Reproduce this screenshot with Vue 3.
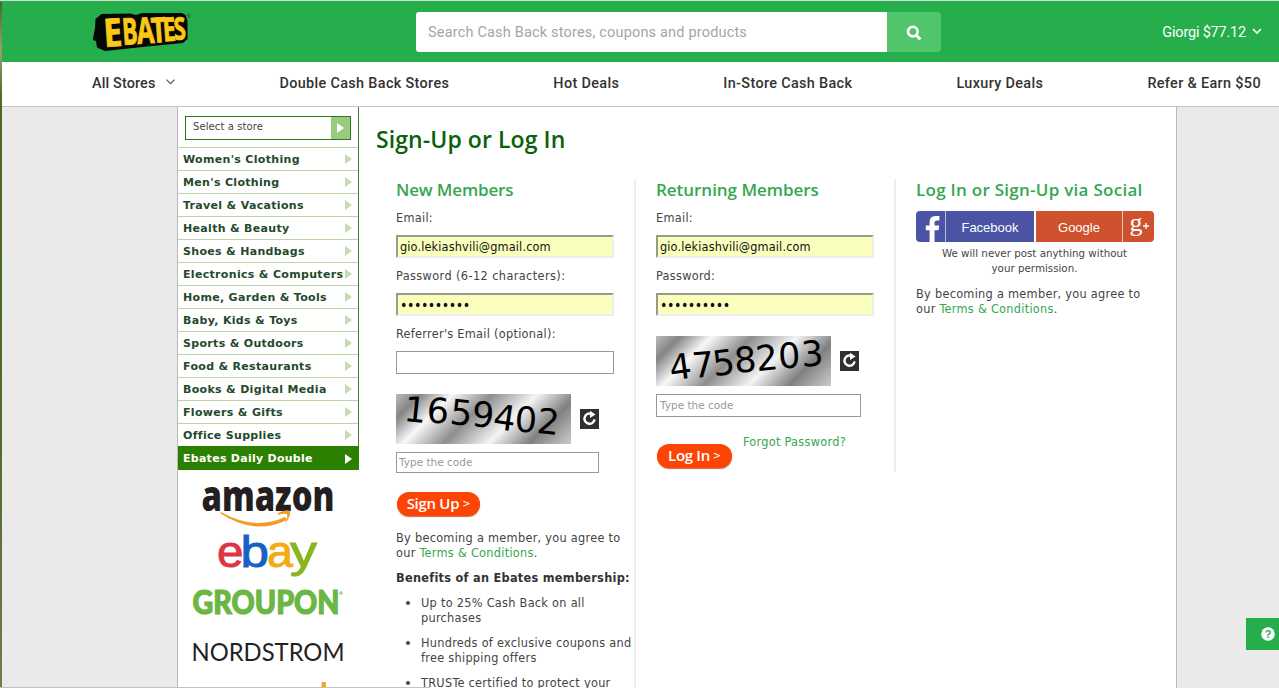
<script setup>
const nav = ['Double Cash Back Stores', 'Hot Deals', 'In-Store Cash Back', 'Luxury Deals', 'Refer & Earn $50']
const categories = [
  "Women's Clothing", "Men's Clothing", 'Travel & Vacations', 'Health & Beauty', 'Shoes & Handbags',
  'Electronics & Computers', 'Home, Garden & Tools', 'Baby, Kids & Toys', 'Sports & Outdoors',
  'Food & Restaurants', 'Books & Digital Media', 'Flowers & Gifts', 'Office Supplies',
]
const email = 'gio.lekiashvili@gmail.com'
const dots = '••••••••••'
const brand = [
  { c: 'E', x: 12.5, y: 38, s: 39, w: 18.5 }, { c: 'B', x: 31, y: 36, s: 37, w: 15.5 }, { c: 'A', x: 45.5, y: 35, s: 36, w: 17.5 },
  { c: 'T', x: 60, y: 34, s: 35, w: 15 }, { c: 'E', x: 71.5, y: 32.5, s: 33, w: 13 }, { c: 'S', x: 82.5, y: 31, s: 31, w: 12 },
]
const ebay = [
  { c: 'e', x: 39, w: 26.5, f: '#dc3545' }, { c: 'b', x: 62.5, w: 28.5, f: '#1562c4' },
  { c: 'a', x: 89, w: 26, f: '#f2ab13' }, { c: 'y', x: 112, w: 27, f: '#8ab51e' },
]
const captchaA = [
  { d: '1', x: 18, y: 28, r: 6 }, { d: '6', x: 41, y: 29, r: 4 }, { d: '5', x: 64, y: 31, r: 6 },
  { d: '9', x: 86, y: 33, r: 5 }, { d: '4', x: 107, y: 36, r: 8 }, { d: '0', x: 129, y: 38, r: 4 },
  { d: '2', x: 151, y: 40, r: 6 },
]
const captchaB = [
  { d: '4', x: 26, y: 43, r: -8 }, { d: '7', x: 48, y: 41, r: -5 }, { d: '5', x: 69, y: 39, r: -7 },
  { d: '8', x: 90, y: 36, r: -4 }, { d: '2', x: 112, y: 34, r: -6 }, { d: '0', x: 134, y: 32, r: -3 },
  { d: '3', x: 157, y: 30, r: -4 },
]
</script>

<template>
  <div class="page">
    <header class="top">
      <svg class="logo" width="102" height="46" viewBox="0 0 102 46">
        <path d="M9.5 5 L38 4.5 L44 6 L50 4 L90 4 L93.5 6 L95.5 12 L95.5 30 L91 34 L60 37 L13 42 L5 38.5 L4 32 L.7 31 L3 19 L3.5 10 Z" fill="#050703" />
        <text v-for="b in brand" :key="b.x" class="brand" :x="b.x" :y="b.y" :font-size="b.s" :textLength="b.w" lengthAdjust="spacingAndGlyphs" :transform="`rotate(-4 ${b.x} ${b.y})`">{{ b.c }}</text>
        <text class="reg" x="94.5" y="8.5">®</text>
      </svg>
      <div class="search">
        <div class="search-field">Search Cash Back stores, coupons and products</div>
        <div class="search-btn">
          <svg width="16" height="16" viewBox="0 0 16 16" fill="none" stroke="#fff" stroke-width="2.6">
            <circle cx="6.8" cy="6.6" r="4.8" /><path d="M10.2 10.2 L14.4 14.4" stroke-width="3" />
          </svg>
        </div>
      </div>
      <div class="user">
        <span>Giorgi $77.12</span>
        <svg width="10" height="7" viewBox="0 0 10 7" fill="none" stroke="#fff" stroke-width="1.6"><path d="M1 1 L5 5 L9 1" /></svg>
      </div>
    </header>
    <nav class="nav">
      <span class="all">All Stores
        <svg width="9" height="6" viewBox="0 0 9 6" fill="none" stroke="#555" stroke-width="1.2"><path d="M.5 .7 L4.5 4.7 L8.5 .7" /></svg>
      </span>
      <span v-for="n in nav" :key="n">{{ n }}</span>
    </nav>
    <div class="body">
      <main class="sheet">
        <aside class="side">
          <div class="menu">
            <div class="picker"><div class="select"><span>Select a store</span><i><b class="tri white"></b></i></div></div>
            <div v-for="c in categories" :key="c" class="cat"><span>{{ c }}</span><b class="tri"></b></div>
            <div class="cat daily"><span>Ebates Daily Double</span><b class="tri white"></b></div>
          </div>
          <svg class="stores" width="180" height="218" viewBox="0 0 180 218">
            <text class="amazon" x="23.5" y="40.5" textLength="133" lengthAdjust="spacingAndGlyphs">amazon</text>
            <path d="M43 42 Q76 61 107 47 L109 50 Q76 66 42 43 Z" fill="#f29b26" />
            <path d="M100 43 Q108 39 112 41 Q113 46 107 54 Q110 47 109 44 Q105 43 100 45 Z" fill="#f29b26" />
            <text v-for="e in ebay" :key="e.c" class="ebay" y="97" :x="e.x" :textLength="e.w" lengthAdjust="spacingAndGlyphs" :fill="e.f" :stroke="e.f">{{ e.c }}</text>
            <text class="groupon" x="14.5" y="144" textLength="147" lengthAdjust="spacingAndGlyphs">GROUPON</text>
            <circle cx="163" cy="123" r="1.3" fill="none" stroke="#6cb644" stroke-width=".8" />
            <text class="nordstrom" x="13.5" y="190.5" textLength="153" lengthAdjust="spacingAndGlyphs">NORDSTROM</text>
            <rect x="143.5" y="212" width="4.5" height="8" rx="1" fill="#f5a623" />
          </svg>
        </aside>
        <section class="content">
          <h1>Sign-Up or Log In</h1>
          <div class="cols">
            <div class="col new">
              <h2 class="h-new">New Members</h2>
              <label>Email:</label>
              <div class="input filled">{{ email }}</div>
              <label class="chars">Password (6-12 characters):</label>
              <div class="input filled pw">{{ dots }}</div>
              <label>Referrer's Email (optional):</label>
              <div class="input plain"></div>
              <div class="captcha-row">
                <svg class="captcha" width="175" height="50" viewBox="0 0 175 50">
                  <text v-for="g in captchaA" :key="g.x" :x="g.x" :y="g.y" :transform="`rotate(${g.r} ${g.x} ${g.y})`">{{ g.d }}</text>
                </svg>
                <div class="reload"><svg width="19" height="20" viewBox="0 0 19 20"><path d="M12.4 5.4 A5.1 5.1 0 1 0 14.6 10.4" fill="none" stroke="#fff" stroke-width="2.4" /><path d="M10 1.8 L15.6 5.4 L10 9 Z" fill="#fff" /></svg></div>
              </div>
              <div class="code">Type the code</div>
              <div class="pill signup"><span>Sign Up</span><em>&gt;</em></div>
              <p>By becoming a member, you agree to<br>our <a>Terms &amp; Conditions</a>.</p>
              <p class="benefits">Benefits of an Ebates membership:</p>
              <ul>
                <li>Up to 25% Cash Back on all<br>purchases</li>
                <li>Hundreds of exclusive coupons and<br>free shipping offers</li>
                <li>TRUSTe certified to protect your</li>
              </ul>
            </div>
            <div class="col ret">
              <h2 class="h-ret">Returning Members</h2>
              <label>Email:</label>
              <div class="input filled">{{ email }}</div>
              <label>Password:</label>
              <div class="input filled pw">{{ dots }}</div>
              <div class="captcha-row">
                <svg class="captcha" width="175" height="50" viewBox="0 0 175 50">
                  <text v-for="g in captchaB" :key="g.x" :x="g.x" :y="g.y" :transform="`rotate(${g.r} ${g.x} ${g.y})`">{{ g.d }}</text>
                </svg>
                <div class="reload"><svg width="19" height="20" viewBox="0 0 19 20"><path d="M12.4 5.4 A5.1 5.1 0 1 0 14.6 10.4" fill="none" stroke="#fff" stroke-width="2.4" /><path d="M10 1.8 L15.6 5.4 L10 9 Z" fill="#fff" /></svg></div>
              </div>
              <div class="code tall">Type the code</div>
              <div class="login-row"><div class="pill login"><span>Log In</span><em>&gt;</em></div><a>Forgot Password?</a></div>
            </div>
            <div class="col soc">
              <h2 class="h-soc">Log In or Sign-Up via Social</h2>
              <div class="social">
                <div class="fb">
                  <svg width="30" height="31" viewBox="0 0 30 31"><path d="M13.6 31 V19.2 H9.8 V14.4 H13.6 V11 Q13.6 5 19.5 5 H23.4 V9.6 H20.8 Q18.5 9.6 18.5 11.8 V14.4 H23.2 L22.5 19.2 H18.5 V31 Z" fill="#fff" /><path d="M29.5 0 V31" stroke="#b9bce0" /></svg>
                  <span>Facebook</span>
                </div>
                <div class="gg">
                  <span>Google</span>
                  <svg width="32" height="31" viewBox="0 0 32 31"><path d="M.5 0 V31" stroke="#f0c9bc" /><text class="g" x="7.5" y="19.5" textLength="13" lengthAdjust="spacingAndGlyphs">g</text><path d="M21 15 H27 M24 12 V18" stroke="#fff" stroke-width="1.3" /></svg>
                </div>
              </div>
              <p class="note">We will never post anything without<br>your permission.</p>
              <p class="agree">By becoming a member, you agree to<br>our <a>Terms &amp; Conditions</a>.</p>
            </div>
          </div>
        </section>
      </main>
    </div>
    <div class="help"><svg width="14" height="14" viewBox="0 0 14 14"><circle cx="7" cy="7" r="6.8" fill="#fff" /><text x="7" y="11" text-anchor="middle">?</text></svg></div>
    <div class="edge"></div>
    <div class="status"></div>
  </div>
</template>

<style>
body { background: #eaeaea; overflow: hidden; }
</style>

<style scoped>
* { box-sizing: border-box; }
svg { overflow: visible; }
.page { position: relative; width: 1279px; height: 688px; overflow: hidden; display: flex; flex-direction: column; background: #eaeaea; font-family: "DejaVu Sans Condensed", "DejaVu Sans", sans-serif; font-size: 12.6px; color: #444; white-space: nowrap; }
.edge { position: absolute; left: 0; top: 2px; bottom: 0; width: 2px; background: linear-gradient(#47632f, #93a56f 7%, #4e6a24 14%, #4f6a2a 60%, #6d7d4c); }
.status { position: absolute; left: 0; bottom: 0; width: 430px; height: 1px; background: #c3c3c3; }
.top { height: 62px; flex: none; background: #25ae4b; border-top: 1px solid #c9dccd; display: flex; padding: 0 17px 0 92px; }
.logo { margin-top: 8px; width: 102px; flex: none; }
.brand { font-family: "Open Sans", sans-serif; font-weight: 700; fill: #fbc816; stroke: #fbc816; stroke-width: .8; }
.reg { font: 6px "Liberation Sans", sans-serif; fill: #10330f; }
.search { display: flex; margin: 11px 0 0 222px; width: 525px; height: 40px; border-radius: 3px; overflow: hidden; }
.search-field { width: 471px; background: #fff; padding-left: 12px; font: 14.5px/41px Roboto, sans-serif; letter-spacing: .18px; color: #a5a5a5; }
.search-btn { flex: 1; background: #50c56b; display: flex; align-items: center; justify-content: center; padding-top: 1px; }
.user { margin-left: auto; color: #fff; display: flex; align-items: center; gap: 6px; font: 14.5px Roboto, sans-serif; letter-spacing: -.2px; padding-top: 2px; }
.user svg { margin-bottom: 3px; }
.nav { height: 45px; flex: none; background: #fff; border-bottom: 1px solid #c4c4c4; display: flex; justify-content: space-between; align-items: center; padding: 0 18px 1px 92px; font: 500 14.4px Roboto, sans-serif; letter-spacing: .35px; color: #333; }
.all { letter-spacing: .15px; }
.all svg { margin: 0 0 5px 7px; vertical-align: middle; }
.body { height: 581px; padding-left: 177px; display: flex; }
.sheet { width: 1000px; background: #fff; border: solid #b9b9b9; border-width: 0 1px; display: flex; }
.side { width: 181px; flex: none; }
.menu { border-right: 1px solid #3c7d26; }
.picker { height: 40px; padding: 9px 7px 0; }
.select { height: 24px; border: 1px solid #2b7a13; display: flex; justify-content: space-between; padding-left: 7px; font: 10px/20px "DejaVu Sans", sans-serif; letter-spacing: .1px; color: #444; width: 166px; }
.select i { width: 19px; background: #9aca7e; display: flex; align-items: center; justify-content: center; }
.cat { height: 23px; border-top: 1px solid #bcd3a6; padding: 0 6px 0 5px; display: flex; align-items: center; justify-content: space-between; font: 700 11px/20px "DejaVu Sans", sans-serif; letter-spacing: .32px; color: #24492b; }
.cat span { padding-top: 2px; }
.daily span { padding-top: 0; }
.daily { background: #2b8000; border-color: #2b8000; color: #fff; height: 24px; margin-right: -1px; padding-right: 7px; letter-spacing: .27px; }
.tri { border: 5px solid transparent; border-left: 7px solid #c3ddb0; border-right: 0; flex: none; margin-left: -3px; }
.tri.white { border-left-color: #fff; margin: 0; }
.stores { display: block; }
.amazon { font: 800 42px "Open Sans", sans-serif; fill: #231f20; }
.ebay { font: 44px "Liberation Sans", sans-serif; stroke-width: .9; }
.groupon { font: 900 31.5px Lato, sans-serif; fill: #6cb644; stroke: #6cb644; stroke-width: 1.2; }
.nordstrom { font: 25px Lato, sans-serif; fill: #222; }
.content { padding-left: 17px; }
h1 { margin: 17px 0 0; height: 55px; font: 600 23px/30px "Open Sans", sans-serif; letter-spacing: .08px; color: #0b610b; }
h2 { margin: 0; font: 600 17px/22px "Open Sans", sans-serif; color: #35a753; }
.h-new { letter-spacing: -.15px; }
.h-ret { letter-spacing: -.03px; }
.h-soc { letter-spacing: .27px; }
.cols { display: flex; align-items: flex-start; padding-left: 20px; }
.col { width: 260px; flex: none; letter-spacing: .28px; position: relative; }
.new, .ret { border-right: 2px solid #eee; width: 240px; margin-right: 20px; }
.new { height: 530px; }
.ret { height: 293px; }
label { display: block; margin-top: 8px; line-height: 20px; }
.chars { letter-spacing: .4px; }
h2 + label { margin-top: 7px; }
.input { margin-top: 7px; width: 218px; height: 23px; border: 1px solid #999; padding-left: 3px; line-height: 20px; color: #111; letter-spacing: .14px; }
.filled { background: #faffbd; border: 2px solid; border-color: #999b8a #eee #eee #999b8a; padding-left: 2px; }
.pw { font-size: 14px; letter-spacing: -.47px; line-height: 20px; }
.captcha-row { margin-top: 20px; display: flex; align-items: center; gap: 9px; }
.captcha { background: linear-gradient(135deg, #bbb, #858585 11%, #f8f8f8 25%, #8e8e8e 43%, #f4f4f4 63%, #808080 81%, #ccc); }
.captcha text { font: 35px "DejaVu Sans", sans-serif; fill: #000; text-anchor: middle; letter-spacing: 0; }
.reload { width: 19px; height: 20px; background: #303030; }
.code { margin-top: 8px; width: 203px; height: 21px; border: 1px solid #999; padding-left: 2px; font: 10.5px/19px "DejaVu Sans", sans-serif; letter-spacing: 0; color: #999; }
.tall { width: 205px; height: 23px; line-height: 21px; padding-left: 3px; }
.pill { height: 24px; border-radius: 12px; background: #fc4405; box-shadow: 0 1px 1px #c9704c; color: #fff; display: flex; align-items: center; justify-content: center; gap: 3px; font: 600 15px/20px "Open Sans", sans-serif; letter-spacing: -.3px; margin-left: 1px; padding-bottom: 2px; }
.pill em { font: 10px "DejaVu Sans", sans-serif; padding-top: 1px; }
.signup { width: 83px; margin-top: 19px; margin-bottom: 14px; }
.login { width: 75px; margin-top: 13px; }
.login-row { display: flex; align-items: flex-start; margin-top: 14px; gap: 11px; line-height: 21px; }
p { margin: 0; line-height: 15px; }
a { color: #35a753; }
.benefits { margin-top: 10px; font-weight: 700; color: #333; }
ul { margin: 10px 0 0; padding-left: 25px; line-height: 15px; }
li { margin-bottom: 10px; }
.social { display: flex; gap: 2px; margin-top: 10px; width: 238px; border-radius: 4px; overflow: hidden; font: 13px/33px "Liberation Sans", sans-serif; color: #fff; letter-spacing: 0; height: 31px; }
.fb, .gg { width: 118px; display: flex; }
.fb { background: #4b54a4; }
.gg { background: #cd522d; }
.fb span, .gg span { flex: 1; text-align: center; }
.g { font: 26px "Liberation Serif", serif; fill: #fff; }
.note { width: 237px; text-align: center; margin-top: 4px; font: 10.3px/15px "DejaVu Sans", sans-serif; letter-spacing: 0; }
.agree { margin-top: 10px; }
.help { position: absolute; right: 0; top: 618px; width: 33px; height: 32px; background: #25ae4b; padding: 9px 0 0 15px; }
.help text { font: 700 11px "Liberation Sans", sans-serif; fill: #25ae4b; }
</style>
